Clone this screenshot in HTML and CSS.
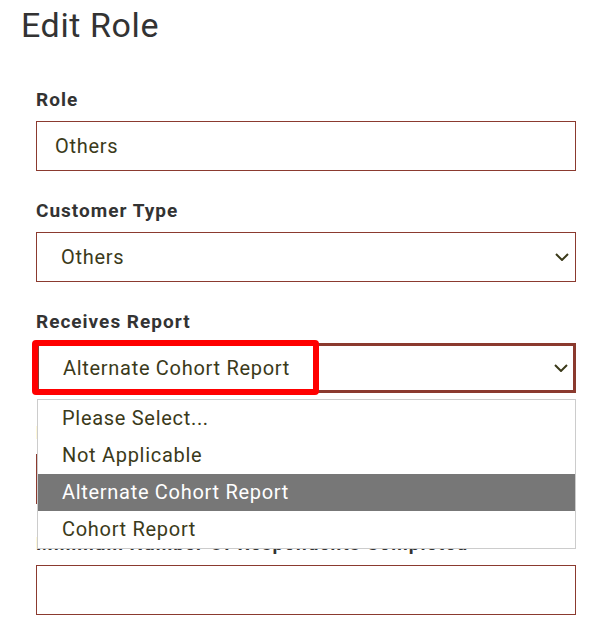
FILE: index.html
```html
<!DOCTYPE html>
<html lang="en">
<head>
<meta charset="utf-8">
<title>Edit Role</title>
<link rel="stylesheet" href="styles.css">
</head>
<body>
<main class="page">
  <h1 class="title">Edit Role</h1>
  <form class="form">
    <div class="field">
      <label class="label">Role</label>
      <div class="control">Others</div>
    </div>
    <div class="field">
      <label class="label">Customer Type</label>
      <div class="control select">
        <span>Others</span>
        <svg class="chevron" width="14" height="8" viewBox="0 0 14 8"><path d="M1 1 L7 7 L13 1" fill="none" stroke="#3b3a1a" stroke-width="2"/></svg>
      </div>
    </div>
    <div class="field">
      <label class="label">Receives Report</label>
      <div class="select-wrap">
        <div class="control select focused">
          <span>Alternate Cohort Report</span>
          <svg class="chevron" width="14" height="8" viewBox="0 0 14 8"><path d="M1 1 L7 7 L13 1" fill="none" stroke="#3b3a1a" stroke-width="2"/></svg>
        </div>
        <div class="highlight"></div>
        <ul class="dropdown">
          <li class="option">Please Select...</li>
          <li class="option">Not Applicable</li>
          <li class="option active">Alternate Cohort Report</li>
          <li class="option">Cohort Report</li>
        </ul>
      </div>
    </div>
    <div class="field">
      <label class="label">Minimum Number Of Respondents Invited</label>
      <div class="control"></div>
    </div>
    <div class="field">
      <label class="label">Minimum Number Of Respondents Completed</label>
      <div class="control"></div>
    </div>
  </form>
</main>
</body>
</html>
```
FILE: styles.css
```css
html, body {
  margin: 0;
  padding: 0;
  background: #ffffff;
}
body {
  font-family: Roboto, "Liberation Sans", sans-serif;
  color: #333333;
}
.page {
  padding: 6px 0 0 0;
}
.title {
  margin: 0 0 0 21px;
  font-size: 34px;
  line-height: 38px;
  font-weight: 400;
  letter-spacing: 0.6px;
  color: #333333;
}
.form {
  margin: 45px 0 0 36px;
  width: 540px;
  display: flex;
  flex-direction: column;
  gap: 29px;
}
.field {
  display: flex;
  flex-direction: column;
  gap: 10px;
}
.label {
  font-size: 19px;
  line-height: 22px;
  font-weight: 700;
  letter-spacing: 1px;
  color: #333333;
  white-space: nowrap;
}
.control {
  box-sizing: border-box;
  height: 50px;
  border: 1px solid #8b3a2f;
  background: #ffffff;
  display: flex;
  align-items: center;
  padding: 0 6px 0 18px;
  font-size: 20px;
  letter-spacing: 0.7px;
  color: #3b3a1a;
}
.select {
  justify-content: space-between;
  padding-left: 24px;
}
.focused {
  border-width: 3px;
  padding-right: 5px;
}
.chevron {
  display: block;
}
.select-wrap {
  position: relative;
}
.highlight {
  position: absolute;
  left: -4px;
  top: -3px;
  width: 287px;
  height: 55px;
  box-sizing: border-box;
  border: 6px solid #ff0000;
  border-radius: 4px;
  pointer-events: none;
}
.dropdown {
  position: absolute;
  left: 1px;
  right: 0;
  top: 56px;
  margin: 0;
  padding: 0;
  list-style: none;
  background: #ffffff;
  border: 1px solid #cccccc;
  z-index: 2;
}
.option {
  height: 37px;
  line-height: 37px;
  padding-left: 24px;
  font-size: 20px;
  letter-spacing: 0.7px;
  color: #3b3a1a;
}
.option.active {
  background: #777777;
  color: #ffffff;
}
```
